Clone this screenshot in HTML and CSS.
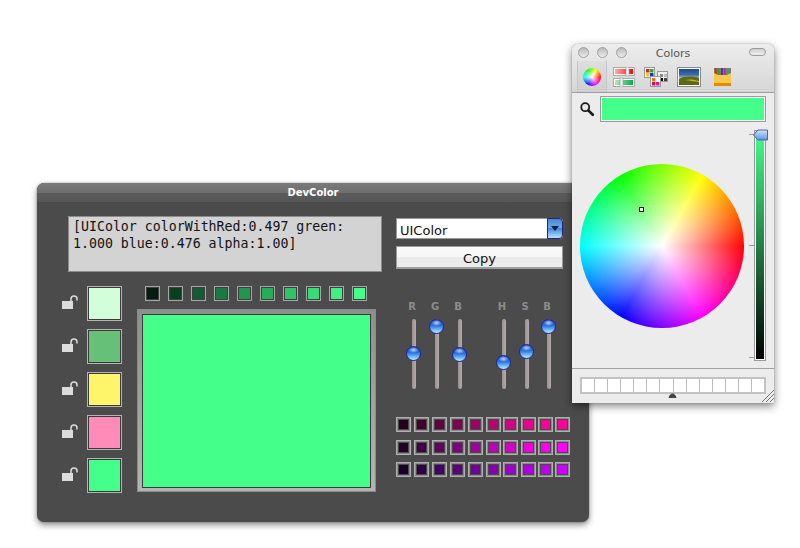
FILE: index.html
```html
<!DOCTYPE html>
<html lang="en">
<head>
<meta charset="utf-8">
<title>DevColor</title>
<link rel="stylesheet" href="styles.css">
</head>
<body>
<section class="dev">
  <header class="dev-title">DevColor</header>
  <div class="dev-top">
    <div class="code">[UIColor colorWithRed:0.497 green:<br>1.000 blue:0.476 alpha:1.00]</div>
    <div class="controls">
      <div class="select"><span class="select-text">UIColor</span><span class="select-btn"><svg width="10" height="7" viewBox="0 0 10 7"><path d="M1 1h8L5 6z" fill="#10203a"/></svg></span></div>
      <div class="copy">Copy</div>
    </div>
  </div>
  <div class="dev-main">
    <div class="locks">
      <div class="lock-row"><svg class="lock" width="16" height="15" viewBox="0 0 16 15"><rect x="0" y="6" width="11" height="8" fill="#dcdcdc"/><path d="M9 6V4a3 3 0 0 1 6 0v1.500" fill="none" stroke="#dcdcdc" stroke-width="1.500"/></svg><div class="sw big a1"></div></div>
      <div class="lock-row"><svg class="lock" width="16" height="15" viewBox="0 0 16 15"><rect x="0" y="6" width="11" height="8" fill="#dcdcdc"/><path d="M9 6V4a3 3 0 0 1 6 0v1.500" fill="none" stroke="#dcdcdc" stroke-width="1.500"/></svg><div class="sw big a2"></div></div>
      <div class="lock-row"><svg class="lock" width="16" height="15" viewBox="0 0 16 15"><rect x="0" y="6" width="11" height="8" fill="#dcdcdc"/><path d="M9 6V4a3 3 0 0 1 6 0v1.500" fill="none" stroke="#dcdcdc" stroke-width="1.500"/></svg><div class="sw big a3"></div></div>
      <div class="lock-row"><svg class="lock" width="16" height="15" viewBox="0 0 16 15"><rect x="0" y="6" width="11" height="8" fill="#dcdcdc"/><path d="M9 6V4a3 3 0 0 1 6 0v1.500" fill="none" stroke="#dcdcdc" stroke-width="1.500"/></svg><div class="sw big a4"></div></div>
      <div class="lock-row"><svg class="lock" width="16" height="15" viewBox="0 0 16 15"><rect x="0" y="6" width="11" height="8" fill="#dcdcdc"/><path d="M9 6V4a3 3 0 0 1 6 0v1.500" fill="none" stroke="#dcdcdc" stroke-width="1.500"/></svg><div class="sw big a5"></div></div>
    </div>
    <div class="center">
      <div class="greens">
        <div class="sw small g1"></div><div class="sw small g2"></div><div class="sw small g3"></div><div class="sw small g4"></div><div class="sw small g5"></div><div class="sw small g6"></div><div class="sw small g7"></div><div class="sw small g8"></div><div class="sw small g9"></div><div class="sw small g10"></div>
      </div>
      <div class="preview"><div class="preview-fill"></div></div>
    </div>
    <div class="right">
      <div class="sliders">
        <div class="slider"><span class="s-label">R</span><div class="track"><span class="knob k34"></span></div></div>
        <div class="slider"><span class="s-label">G</span><div class="track"><span class="knob k7"></span></div></div>
        <div class="slider"><span class="s-label">B</span><div class="track"><span class="knob k35"></span></div></div>
        <div class="slider gap"><span class="s-label">H</span><div class="track"><span class="knob k43"></span></div></div>
        <div class="slider"><span class="s-label">S</span><div class="track"><span class="knob k33"></span></div></div>
        <div class="slider last"><span class="s-label">B</span><div class="track"><span class="knob k7"></span></div></div>
      </div>
      <div class="palette">
        <div class="sw tiny r1"></div><div class="sw tiny r2"></div><div class="sw tiny r3"></div><div class="sw tiny r4"></div><div class="sw tiny r5"></div><div class="sw tiny r6"></div><div class="sw tiny r7"></div><div class="sw tiny r8"></div><div class="sw tiny r9"></div><div class="sw tiny r10"></div>
        <div class="sw tiny p1"></div><div class="sw tiny p2"></div><div class="sw tiny p3"></div><div class="sw tiny p4"></div><div class="sw tiny p5"></div><div class="sw tiny p6"></div><div class="sw tiny p7"></div><div class="sw tiny p8"></div><div class="sw tiny p9"></div><div class="sw tiny p10"></div>
        <div class="sw tiny v1"></div><div class="sw tiny v2"></div><div class="sw tiny v3"></div><div class="sw tiny v4"></div><div class="sw tiny v5"></div><div class="sw tiny v6"></div><div class="sw tiny v7"></div><div class="sw tiny v8"></div><div class="sw tiny v9"></div><div class="sw tiny v10"></div>
      </div>
    </div>
  </div>
</section>

<section class="colors">
  <div class="c-head">
    <div class="c-titlebar">
      <div class="lights"><span class="light"></span><span class="light"></span><span class="light"></span></div>
      <span class="c-title">Colors</span>
      <span class="pill"></span>
    </div>
    <div class="tools">
      <div class="tool selected"><span class="mini-wheel"></span></div>
      <svg class="tool-icon i-sliders" width="24" height="20" viewBox="0 0 24 20">
        <rect x="1.500" y=".5" width="21" height="8" fill="#fff" stroke="#aaa"/><rect x="3" y="2" width="18" height="5" fill="url(#gr)"/>
        <rect x="1.500" y="11.500" width="21" height="8" fill="#fff" stroke="#aaa"/><rect x="3" y="13" width="18" height="5" fill="url(#gg)"/>
        <rect x="14" y="0" width="3" height="9" fill="#eee" stroke="#999" stroke-width=".6"/><rect x="8" y="11" width="3" height="9" fill="#eee" stroke="#999" stroke-width=".6"/>
        <defs>
          <linearGradient id="gr"><stop offset="0" stop-color="#f6b0b0"/><stop offset="1" stop-color="#ff0000"/></linearGradient>
          <linearGradient id="gg"><stop offset="0" stop-color="#b8e8c0"/><stop offset="1" stop-color="#00b040"/></linearGradient>
        </defs>
      </svg>
      <svg class="tool-icon i-pal" width="24" height="20" viewBox="0 0 24 20">
        <rect x="13.500" y="4.500" width="10" height="10" fill="#eee" stroke="#999"/>
        <rect x="16" y="7" width="3" height="3" fill="#888"/><rect x="20" y="7" width="3" height="3" fill="#bbb"/><rect x="16" y="11" width="3" height="3" fill="#000"/><rect x="20" y="11" width="3" height="3" fill="#444"/>
        <rect x=".5" y=".5" width="10" height="10" fill="#fff" stroke="#999"/>
        <rect x="2" y="2" width="3.500" height="3.500" fill="#e02020"/><rect x="6" y="2" width="3.500" height="3.500" fill="#20b030"/><rect x="2" y="6" width="3.500" height="3.500" fill="#f0d000"/><rect x="6" y="6" width="3.500" height="3.500" fill="#2030d0"/>
        <rect x="6.500" y="9.500" width="10" height="10" fill="#fff" stroke="#999"/>
        <rect x="8" y="11" width="3.500" height="3.500" fill="#f07010"/><rect x="12" y="11" width="3.500" height="3.500" fill="#f0f0f0"/><rect x="8" y="15" width="3.500" height="3.500" fill="#c01060"/><rect x="12" y="15" width="3.500" height="3.500" fill="#d02090"/>
      </svg>
      <svg class="tool-icon i-img" width="24" height="20" viewBox="0 0 24 20">
        <rect x=".5" y=".5" width="23" height="19" fill="#fff" stroke="#8a8a8a"/>
        <rect x="2" y="2" width="20" height="16" fill="url(#sky)"/>
        <path d="M2 12c6-3 12-3 20-1v7H2z" fill="#5a6a18"/>
        <path d="M8 13c5-1 9-.5 14 1v1c-5-1-9-1-14-2z" fill="#c8b030"/>
        <defs>
          <linearGradient id="sky" x2="0" y2="1"><stop offset="0" stop-color="#1c4c90"/><stop offset=".35" stop-color="#3a6aa8"/><stop offset=".6" stop-color="#d8b8c0"/><stop offset="1" stop-color="#c0a080"/></linearGradient>
        </defs>
      </svg>
      <svg class="tool-icon i-cray" width="20" height="20" viewBox="0 0 20 20">
        <rect x="1" y="1" width="17" height="9" fill="#8a7a4a"/>
        <rect x="2" y="1" width="2" height="8" fill="#d03030"/><rect x="5" y="1" width="2" height="8" fill="#30a040"/><rect x="8" y="1" width="2" height="8" fill="#3040c0"/><rect x="11" y="1" width="2" height="8" fill="#c030a0"/><rect x="14" y="1" width="2" height="8" fill="#20a0b0"/>
        <path d="M1 6l4 2h9l4-2v10H1z" fill="#f8c848"/>
        <rect x="1" y="16" width="17" height="3" fill="#e08c10"/>
      </svg>
    </div>
  </div>
  <div class="c-search">
    <svg class="mag" width="16" height="16" viewBox="0 0 18 18"><circle cx="7" cy="7" r="4.500" fill="#e8e8e8" stroke="#1a1a1a" stroke-width="2"/><path d="M10.500 10.500l5 5" stroke="#1a1a1a" stroke-width="3" stroke-linecap="round"/></svg>
    <div class="c-field"></div>
  </div>
  <div class="c-picker">
    <div class="wheel"><span class="marker"></span></div>
    <div class="v-slider">
      <span class="tick t1"></span><span class="tick t2"></span><span class="tick t3"></span>
      <svg class="v-knob" width="15" height="12" viewBox="0 0 15 12"><path d="M.5 6L5 1h9.500v10H5z" fill="url(#vk)" stroke="#5a5ab0"/><defs><linearGradient id="vk" x2="0" y2="1"><stop offset="0" stop-color="#d0e4fa"/><stop offset="1" stop-color="#5a96e0"/></linearGradient></defs></svg>
    </div>
  </div>
  <div class="c-foot">
    <div class="well">
      <span class="cell"></span><span class="cell"></span><span class="cell"></span><span class="cell"></span><span class="cell"></span><span class="cell"></span><span class="cell"></span><span class="cell"></span><span class="cell"></span><span class="cell"></span><span class="cell"></span><span class="cell"></span><span class="cell"></span><span class="cell"></span>
    </div>
    <svg class="handle" width="9" height="5" viewBox="0 0 9 5"><path d="M.5 5C1 2 3 .5 4.500 .5S8 2 8.500 5z" fill="#444"/></svg>
    <svg class="grip" width="12" height="12" viewBox="0 0 12 12"><path d="M0 12L12 0M4 12L12 4M8 12l4-4" stroke="#777" stroke-width="1"/></svg>
  </div>
</section>
</body>
</html>
```
FILE: styles.css
```css
* { box-sizing: border-box; }
html, body { margin: 0; padding: 0; }
body {
  position: relative;
  width: 800px;
  height: 548px;
  overflow: hidden;
  background: #fff;
  font-family: "DejaVu Sans", sans-serif;
}

/* DevColor window */
.dev {
  position: absolute;
  left: 37px;
  top: 183px;
  width: 552px;
  height: 339px;
  background: #4b4b4b;
  border-radius: 7px;
  box-shadow: 0 3px 6px rgba(0,0,0,.45), 0 0 2px rgba(0,0,0,.3);
}
.dev-title {
  height: 19px;
  border-radius: 7px 7px 0 0;
  background: linear-gradient(#7a7a7a 0, #6e6e6e 50%, #5c5c5c 50%, #565656 100%);
  color: #fff;
  font: bold 10px/20px "DejaVu Sans", sans-serif;
  text-align: center;
}
.dev-top {
  display: flex;
  gap: 14px;
  padding: 14px 0 0 31px;
}
.code {
  width: 314px;
  height: 56px;
  background: #d3d3d3;
  border: 1px solid #8c8c8c;
  padding: 2px 0 0 4px;
  color: #111;
  font: 13.250px/16.500px "DejaVu Sans Mono", monospace;
  white-space: nowrap;
}
.controls {
  width: 167px;
  padding-top: 2px;
  display: flex;
  flex-direction: column;
  gap: 7px;
}
.select {
  height: 21px;
  display: flex;
  background: #fff;
  border: 1px solid #9a9a9a;
  border-right: 0;
  border-radius: 0 4px 4px 0;
}
.select-text {
  flex: 1;
  padding: 2px 0 0 3px;
  color: #111;
  font-size: 13px;
  line-height: 20px;
}
.select-btn {
  width: 16px;
  margin: -1px 0;
  display: flex;
  align-items: flex-start;
  justify-content: center;
  padding-top: 6px;
  border: 1px solid #23237a;
  border-radius: 0 4px 4px 0;
  background: linear-gradient(#4a86d8 0, #6ea8e8 45%, #3f86e0 50%, #b8e4ff 100%);
}
.copy {
  height: 23px;
  border: 1px solid #9c9c9c;
  border-bottom-width: 2px;
  background: linear-gradient(#fafafa 0, #f6f6f6 50%, #ebebeb 50%, #ebebeb 100%);
  color: #111;
  font-size: 13px;
  line-height: 23px;
  text-align: center;
}
.dev-main {
  display: flex;
  padding: 14px 0 0 25px;
}
.locks {
  width: 75px;
  flex: none;
  display: flex;
  flex-direction: column;
  gap: 8px;
}
.lock-row {
  display: flex;
  align-items: flex-start;
  gap: 9px;
}
.lock { margin-top: 9px; flex: none; }

.sw {
  flex: none;
  border: 1px solid #b4b4b4;
  padding: 1px;
  background-clip: content-box;
}
.big { width: 35px; height: 35px; box-shadow: inset 0 0 0 1px #3a3a3a; }
.small { width: 15px; height: 15px; border-color: #a6a6a6; box-shadow: inset 0 0 0 1px #3f3f3f; }
.tiny { width: 15px; height: 15px; border-width: 1px; padding: 2px; border-color: #b0b0b0; box-shadow: inset 0 0 0 1px #8a8a8a, inset 0 0 0 2px #4a4a4a; }

.a1 { background-color: #d2ffda; }
.a2 { background-color: #66c078; }
.a3 { background-color: #fff56a; }
.a4 { background-color: #ff8cb8; }
.a5 { background-color: #44ff8a; }

.center { width: 239px; flex: none; }
.greens {
  display: flex;
  gap: 8px;
  padding-left: 8px;
}
.g1 { background-color: #031e0e; }
.g2 { background-color: #0a3e1e; }
.g3 { background-color: #115c30; }
.g4 { background-color: #187a40; }
.g5 { background-color: #20964e; }
.g6 { background-color: #28ac5a; }
.g7 { background-color: #30c468; }
.g8 { background-color: #38dc74; }
.g9 { background-color: #3ff082; }
.g10 { background-color: #44ff8a; }

.preview {
  margin-top: 8px;
  width: 239px;
  height: 183px;
  padding: 4px 4px 3px;
  border: 1px solid #8a8a8a;
  background: linear-gradient(#8e8e8e, #b4b4b4);
}
.preview-fill {
  height: 100%;
  background: #44ff8a;
  border: 1px solid #3a3a3a;
}

.right { margin-left: 20px; width: 175px; flex: none; }
.sliders {
  display: flex;
  padding: 14px 0 0 6px;
}
.slider {
  width: 23px;
  display: flex;
  flex-direction: column;
  align-items: center;
}
.slider.gap { margin-left: 21px; }
.slider.last { margin-left: -1px; }
.s-label {
  height: 13px;
  margin: 0 3px 6px 0;
  color: #8c8c8c;
  font: bold 10px/13px "DejaVu Sans", sans-serif;
}
.track {
  position: relative;
  width: 4px;
  height: 70px;
  border-radius: 2px;
  background: linear-gradient(90deg, #9a9090, #b2acac);
}
.knob {
  position: absolute;
  left: -5.500px;
  width: 15px;
  height: 15px;
  border-radius: 50%;
  border: 1px solid #22229a;
  background:
    radial-gradient(ellipse 5px 3px at 50% 22%, rgba(255,255,255,.75), rgba(255,255,255,0) 100%),
    linear-gradient(#1848c8 0, #2a74e0 45%, #80c4f8 80%, #c4ecff 100%);
}
.k7 { top: 0; }
.k33 { top: 25px; }
.k34 { top: 27px; }
.k35 { top: 28px; }
.k43 { top: 36px; }

.palette {
  margin-top: 28px;
  display: grid;
  grid-template-columns: repeat(5, 18px) repeat(4, 17.250px) 15px;
  grid-auto-rows: 15px;
  row-gap: 7.500px;
}
.r1 { background-color: #24001a; } .r2 { background-color: #42002c; } .r3 { background-color: #60003e; } .r4 { background-color: #800050; }
.r5 { background-color: #a00064; } .r6 { background-color: #bc0074; } .r7 { background-color: #d40084; } .r8 { background-color: #ec0090; }
.r9 { background-color: #fa0096; } .r10 { background-color: #ff009a; }
.p1 { background-color: #240024; } .p2 { background-color: #420042; } .p3 { background-color: #600060; } .p4 { background-color: #800080; }
.p5 { background-color: #a000a0; } .p6 { background-color: #bc00bc; } .p7 { background-color: #d400c8; } .p8 { background-color: #ec00dc; }
.p9 { background-color: #fa00f0; } .p10 { background-color: #ff00ff; }
.v1 { background-color: #18002a; } .v2 { background-color: #2e0048; } .v3 { background-color: #440068; } .v4 { background-color: #5a0080; }
.v5 { background-color: #700098; } .v6 { background-color: #8400b0; } .v7 { background-color: #9800c8; } .v8 { background-color: #ac00dc; }
.v9 { background-color: #bc00ec; } .v10 { background-color: #cc00ff; }

/* Colors panel */
.colors {
  position: absolute;
  left: 572px;
  top: 44px;
  width: 202px;
  height: 359px;
  background: #ececec;
  border-radius: 6px 6px 0 0;
  box-shadow: 0 3px 9px rgba(0,0,0,.5), 0 0 1px rgba(0,0,0,.5);
}
.c-head {
  height: 49px;
  border-radius: 6px 6px 0 0;
  background: linear-gradient(#ededed, #d6d6d6);
  border-bottom: 1px solid #9c9c9c;
}
.c-titlebar {
  position: relative;
  height: 17px;
  text-align: center;
}
.lights {
  position: absolute;
  left: 6px;
  top: 3px;
  display: flex;
  gap: 8px;
}
.light {
  width: 11px;
  height: 11px;
  border-radius: 50%;
  border: 1px solid #a0a0a0;
  background: linear-gradient(#b8b8b8, #ececec);
}
.c-title {
  color: #555;
  font: 11px/14px "DejaVu Sans", sans-serif;
  display: block;
  padding-top: 3px;
}
.pill {
  position: absolute;
  right: 8px;
  top: 4px;
  width: 17px;
  height: 8px;
  border-radius: 4px;
  border: 1px solid #9a9a9a;
  background: linear-gradient(#cfcfcf, #f0f0f0);
}
.tools {
  display: flex;
  align-items: center;
  height: 31px;
  padding-left: 5px;
}
.tool.selected {
  width: 30px;
  height: 31px;
  display: flex;
  align-items: center;
  justify-content: center;
  background: linear-gradient(#dedede, #cfcfcf);
  box-shadow: inset 1px 0 #c6c6c6, inset -1px 0 #c6c6c6;
}
.mini-wheel {
  width: 18px;
  height: 18px;
  border-radius: 50%;
  background:
    radial-gradient(circle, #fff 0, rgba(255,255,255,0) 70%),
    conic-gradient(from 90deg, #f00, #f0f, #00f, #0ff, #0f0, #ff0, #f00);
}
.tool-icon { flex: none; }
.i-sliders { margin-left: 5px; }
.i-pal { margin-left: 8px; }
.i-img { margin-left: 9px; }
.i-cray { margin-left: 12px; }

.c-search {
  display: flex;
  align-items: center;
  gap: 5px;
  height: 37px;
  padding: 0 8px 6px 7px;
}
.mag { flex: none; }
.c-field {
  flex: 1;
  height: 26px;
  border: 1px solid #9c9c9c;
  background: #44ff8a;
  box-shadow: inset 0 0 0 1px #fff;
}
.c-picker {
  position: relative;
  display: flex;
  justify-content: space-between;
  padding: 0 8px;
  height: 231px;
}
.wheel {
  position: relative;
  width: 164px;
  height: 164px;
  margin-top: 34px;
  border-radius: 50%;
  background:
    radial-gradient(circle closest-side, #fff 0, rgba(255,255,255,.85) 15%, rgba(255,255,255,0) 100%),
    conic-gradient(from 90deg, #f00, #f0f, #00f, #0ff, #0f0, #ff0, #f00);
}
.marker {
  position: absolute;
  left: 59px;
  top: 43px;
  width: 5px;
  height: 5px;
  background: #fff;
  border: 1px solid #000;
}
.v-slider {
  position: relative;
  width: 12px;
  height: 231px;
  border: 1px solid #9a9a9a;
  box-shadow: inset 0 0 0 1px #fff;
  background: linear-gradient(#44ff8a 0, #000 100%);
}
.tick {
  position: absolute;
  left: -6px;
  width: 5px;
  height: 1px;
  background: #999;
}
.t1 { top: 3px; }
.t2 { top: 114px; }
.t3 { top: 226px; }
.v-knob {
  position: absolute;
  left: -2px;
  top: -2px;
}
.c-foot {
  position: relative;
  height: 34px;
  border-top: 1px solid #a0a0a0;
  margin-top: 7px;
  padding: 8px 0 0 8px;
}
.well {
  display: flex;
  width: 186px;
  height: 17px;
  border: 2px solid #c2c2c2;
  background: #c2c2c2;
}
.cell {
  flex: 1;
  background: #fff;
  border-right: 1px solid #bcbcbc;
}
.cell:last-child { border-right: 0; }
.handle {
  position: absolute;
  left: 96px;
  top: 24px;
}
.grip {
  position: absolute;
  right: 0;
  bottom: 0;
}
```
